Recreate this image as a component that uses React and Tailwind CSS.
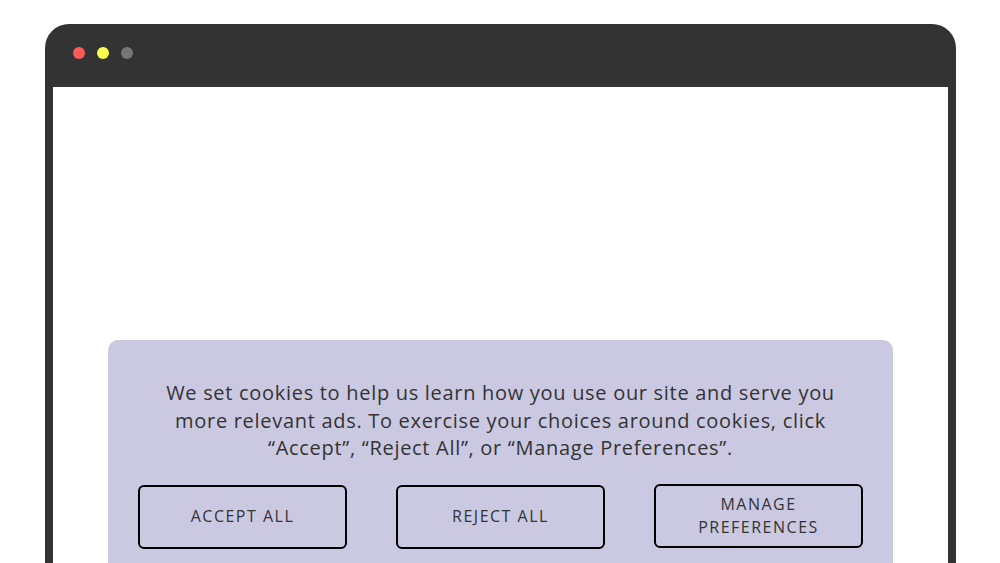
export default function App() {
  const font = { fontFamily: '"Open Sans", "DejaVu Sans", sans-serif' };
  return (
    <div className="w-[1000px] h-[563px] overflow-hidden bg-white" style={font}>
      <div className="ml-[45px] mt-[24px] w-[911px] h-[600px] rounded-t-[24px] bg-[#333333] flex flex-col">
        <div className="h-[63px] shrink-0 flex items-center gap-[12px] pl-[28px] pb-[6px]">
          <span className="w-[12px] h-[12px] rounded-full bg-[#ff5a5a]" />
          <span className="w-[12px] h-[12px] rounded-full bg-[#ffff4d]" />
          <span className="w-[12px] h-[12px] rounded-full bg-[#777777]" />
        </div>
        <div className="mx-[8px] flex-1 bg-white pt-[253px] px-[55px]">
          <div className="h-[400px] rounded-[10px] bg-[#cbc9e2] px-[30px] pt-[39px]">
            <p className="text-center text-[20px] leading-[27.5px] tracking-[0.7px] text-[#333333]">
              We set cookies to help us learn how you use our site and serve you
              <br />
              more relevant ads. To exercise your choices around cookies, click
              <br />
              “Accept”, “Reject All”, or “Manage Preferences”.
            </p>
            <div className="mt-[23px] flex gap-[49px]">
              <button className="w-[209px] h-[64px] border-2 border-black rounded-[6px] text-[16px] leading-[23px] tracking-[1.5px] text-[#333333] uppercase">
                Accept All
              </button>
              <button className="w-[209px] h-[64px] border-2 border-black rounded-[6px] text-[16px] leading-[23px] tracking-[1.5px] text-[#333333] uppercase">
                Reject All
              </button>
              <button className="w-[209px] h-[64px] -mt-[1px] border-2 border-black rounded-[6px] text-[16px] leading-[23px] tracking-[1.5px] text-[#333333] uppercase">
                Manage
                <br />
                Preferences
              </button>
            </div>
          </div>
        </div>
      </div>
    </div>
  );
}
